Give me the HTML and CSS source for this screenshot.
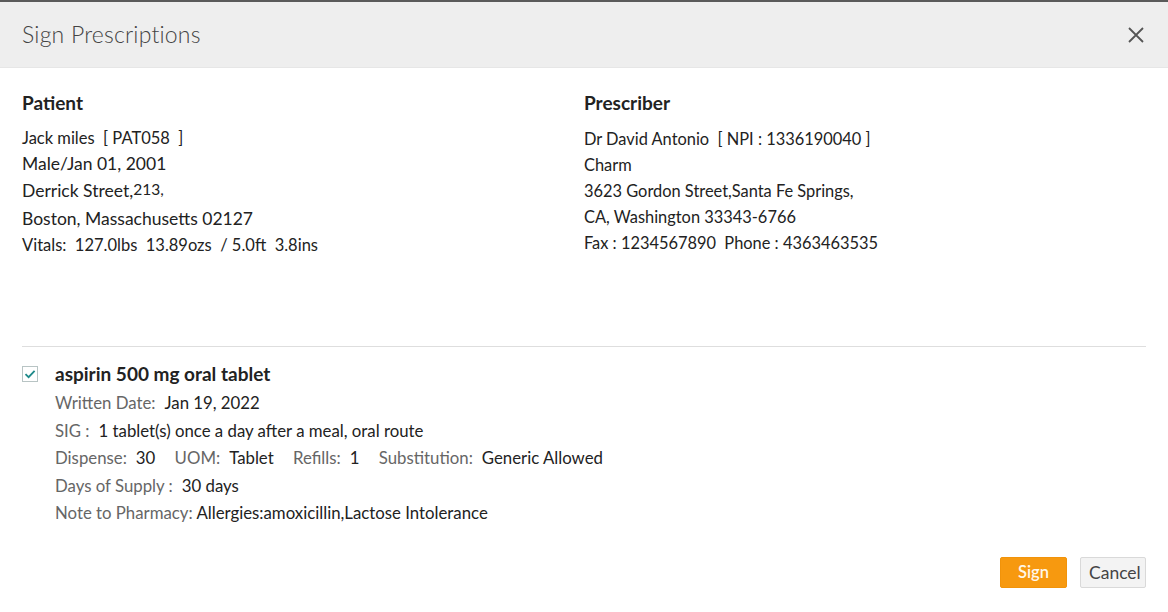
FILE: index.html
```html
<html lang="en">
<head>
    <meta charset="UTF-8">
    <title>Sign Prescriptions</title>
    <link rel="stylesheet" href="styles.css">
</head>
<body>
    <div class="modal">
        <div class="modal-head">
            <span class="modal-title">Sign Prescriptions</span>
            <button class="close-btn" aria-label="Close">
                <svg width="16" height="16" viewBox="0 0 16 16"><path d="M1 1L15 15M15 1L1 15" stroke="#555" stroke-width="1.8" fill="none"/></svg>
            </button>
        </div>

        <div class="modal-body">
            <div class="parties">
                <div class="party">
                    <h3>Patient</h3>
                    <div class="ln sm">Jack miles&nbsp; [ PAT058&nbsp; ]</div>
                    <div class="ln lg">Male/Jan 01, 2001</div>
                    <div class="ln lg tall">Derrick Street,<span class="apt">213,</span></div>
                    <div class="ln lg mid">Boston, Massachusetts 02127</div>
                    <div class="ln sm">Vitals:&nbsp; 127.0lbs&nbsp; 13.89ozs&nbsp; / 5.0ft&nbsp; 3.8ins</div>
                </div>
                <div class="party presc">
                    <h3>Prescriber</h3>
                    <div class="ln sm">Dr David Antonio&nbsp; [ NPI : 1336190040 ]</div>
                    <div class="ln sm">Charm</div>
                    <div class="ln sm">3623 Gordon Street,Santa Fe Springs,</div>
                    <div class="ln sm">CA, Washington 33343-6766</div>
                    <div class="ln sm">Fax : 1234567890&nbsp; Phone : 4363463535</div>
                </div>
            </div>

            <div class="rx">
                <div class="rx-check">
                    <svg width="16" height="16" viewBox="0 0 16 16"><rect x="0.5" y="0.5" width="15" height="15" fill="#fff" stroke="#b8c4c4"/><path d="M3.5 8.2L6.6 11.2L12.6 4.8" stroke="#1f8a8a" stroke-width="1.8" fill="none"/></svg>
                </div>
                <div class="rx-info">
                    <div class="rx-name">aspirin 500 mg oral tablet</div>
                    <div class="rx-ln"><span class="lbl">Written Date:</span><span class="val">Jan 19, 2022</span></div>
                    <div class="rx-ln"><span class="lbl">SIG :</span><span class="val">1 tablet(s) once a day after a meal, oral route</span></div>
                    <div class="rx-ln">
                        <span class="lbl">Dispense:</span><span class="val grp">30</span>
                        <span class="lbl">UOM:</span><span class="val grp">Tablet</span>
                        <span class="lbl">Refills:</span><span class="val grp">1</span>
                        <span class="lbl">Substitution:</span><span class="val">Generic Allowed</span>
                    </div>
                    <div class="rx-ln"><span class="lbl">Days of Supply :</span><span class="val">30 days</span></div>
                    <div class="rx-ln"><span class="lbl">Note to Pharmacy:</span> <span class="note">Allergies:amoxicillin,Lactose Intolerance</span></div>
                </div>
            </div>

            <div class="actions">
                <button class="btn btn-sign">Sign</button>
                <button class="btn btn-cancel">Cancel</button>
            </div>
        </div>
    </div>
</body>
</html>
```

FILE: styles.css
```css
body {
    margin: 0;
    background-color: #fff;
    font-family: Lato, "Open Sans", sans-serif;
    color: #222;
}

.modal-head {
    display: flex;
    align-items: center;
    justify-content: space-between;
    height: 65px;
    padding: 0 22px;
    background-color: #eeeeee;
    border-top: 2px solid #5a5a5a;
    border-bottom: 1px solid #e6e6e6;
}

.modal-title {
    font-size: 23px;
    font-weight: 300;
    color: #444;
    letter-spacing: 0.2px;
    position: relative;
    top: -1px;
}

.close-btn {
    border: none;
    background: transparent;
    padding: 0;
    margin-right: 2px;
    width: 16px;
    height: 16px;
    cursor: pointer;
    display: flex;
}

.modal-body {
    padding: 24px 22px 0 22px;
}

.parties {
    display: grid;
    grid-template-columns: 1fr 1fr;
    height: 254px;
    border-bottom: 1px solid #dedede;
}

.party h3 {
    margin: 0 0 11px 0;
    font-size: 19px;
    line-height: 22px;
    font-weight: 700;
    color: #222;
}

.presc h3 {
    margin-bottom: 12px;
}

.presc .ln.sm {
    font-size: 16.4px;
}

.ln {
    line-height: 26px;
}

.ln.sm {
    font-size: 16.5px;
}

.ln.lg {
    font-size: 17.5px;
    line-height: 26px;
}

.ln.lg.tall {
    line-height: 28px;
}

.ln.lg.mid {
    line-height: 27px;
}

.apt {
    font-size: 15.5px;
    position: relative;
    top: -2px;
}

.rx {
    display: flex;
    gap: 17px;
    padding-top: 18px;
}

.rx-check {
    padding-top: 1px;
    height: 16px;
}

.rx-name {
    font-size: 19px;
    font-weight: 700;
    line-height: 18px;
    margin-bottom: 6px;
}

.rx-ln {
    font-size: 16.8px;
    line-height: 27.5px;
}

.lbl {
    color: #666;
}

.val {
    margin-left: 9px;
    color: #222;
}

.val.grp {
    margin-right: 15px;
}

.note {
    color: #222;
}

.actions {
    display: flex;
    justify-content: flex-end;
    gap: 13px;
    margin-top: 30px;
}

.btn {
    height: 31px;
    padding: 0 8px;
    font-family: Lato, sans-serif;
    font-size: 17.5px;
    border-radius: 2px;
    cursor: pointer;
}

.btn-sign {
    background-color: #f7990f;
    border: 1px solid #f1930a;
    color: #fff7e8;
    font-weight: 600;
    font-size: 16.5px;
    width: 67px;
}

.btn-cancel {
    background-color: #f3f3f3;
    border: 1px solid #d9d9d9;
    color: #444;
    width: 66px;
}
```
